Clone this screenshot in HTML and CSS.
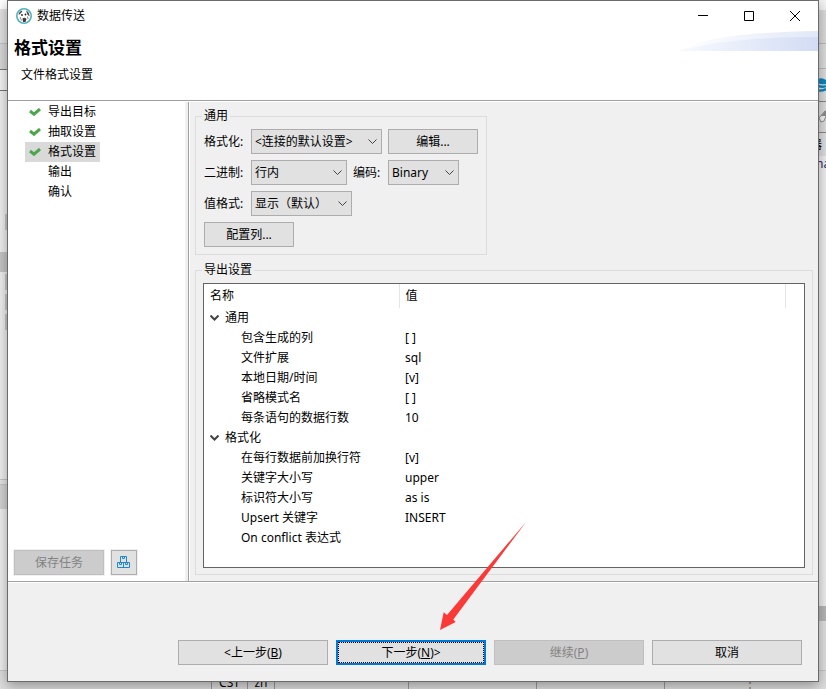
FILE: index.html
```html
<!DOCTYPE html>
<html lang="zh-CN">
<head>
<meta charset="utf-8">
<title>数据传送</title>
<link rel="stylesheet" href="styles.css">
</head>
<body>
<div class="desktop">
  <div class="backdrop" aria-hidden="true">
    <div class="strip strip-left"></div>
    <div class="strip strip-right">
      <svg class="edge-icons" width="8" height="60" viewBox="0 0 8 60">
        <path d="M0 1Q4 -1 8 2V6Q3 7 0 5Z" fill="#0d86c0"/>
        <path d="M0 8Q5 9.500 8 8M0 12.500Q5 13 8 11" fill="none" stroke="#0d86c0" stroke-width="2.400"/>
        <path d="M1 40L7 33V36L8 38L6 43L3 44Z" fill="#f4f4f4" stroke="#8c8c8c"/>
        <path d="M3 38L8 32V38Z" fill="#8c8c8c"/>
      </svg>
      <span class="edge-text">器</span>
      <span class="edge-text edge-code">ha</span>
    </div>
    <div class="status-bar">
      <span class="cell cell-lead"></span><span class="cell cell-zone">CST</span><span class="cell cell-lang">zh</span><span class="cell cell-pos"></span><span class="cell cell-mode"></span><span class="cell cell-mode"></span><span class="cell cell-end">⋮</span>
    </div>
  </div>

  <main class="dialog">
    <header class="title-bar">
      <svg class="app-icon" width="16" height="16" viewBox="0 0 16 16">
        <circle cx="8" cy="8" r="7.200" fill="#fff" stroke="#4fb3bf" stroke-width="1.600"/>
        <path d="M2.500 7Q3 3 6.500 2.500L5.500 4.500L4 6ZM10 2.500Q13.500 4 13.500 8.500L11.500 6.500ZM6.500 10.500Q8.500 9 10.500 11L9.500 14H7Z" fill="#4a3c36"/>
        <path d="M4 9L5.500 12.500M11.500 8.500L12 11" stroke="#8b8480"/>
        <circle cx="6" cy="7" r=".9" fill="#222"/><circle cx="9.500" cy="6.500" r=".9" fill="#222"/>
      </svg>
      <span class="title-text">数据传送</span>
      <button class="win-button" aria-label="最小化"><svg width="10" height="11" viewBox="0 0 10 11"><path d="M0 5.500H10"/></svg></button>
      <button class="win-button" aria-label="最大化"><svg width="10" height="11" viewBox="0 0 10 11"><path d="M.5 1.500H9.500V10.500H.5Z"/></svg></button>
      <button class="win-button" aria-label="关闭"><svg width="10" height="11" viewBox="0 0 10 11"><path d="M0 1L10 11M10 1L0 11"/></svg></button>
    </header>

    <section class="banner">
      <h1>格式设置</h1>
      <p>文件格式设置</p>
      <svg class="swoosh" width="140" height="20" viewBox="0 0 140 20">
        <defs>
          <linearGradient id="s1"><stop offset="0" stop-color="#fff"/><stop offset="1" stop-color="#e1e8f7"/></linearGradient>
          <linearGradient id="s2"><stop offset="0" stop-color="#f8fafe"/><stop offset="1" stop-color="#d3dcf4"/></linearGradient>
        </defs>
        <path d="M0 20C25 6 75 1 140 0V20Z" fill="url(#s1)"/>
        <path d="M0 20C40 9 90 6 140 6V20Z" fill="url(#s2)"/>
      </svg>
    </section>

    <div class="body">
      <aside class="sidebar">
        <ul class="steps">
          <li><svg class="check" width="12" height="8" viewBox="0 0 12 8"><path d="M1 3L5 6.200L11 1"/></svg><a href="#target">导出目标</a></li>
          <li><svg class="check" width="12" height="8" viewBox="0 0 12 8"><path d="M1 3L5 6.200L11 1"/></svg><a href="#extract">抽取设置</a></li>
          <li class="current"><svg class="check" width="12" height="8" viewBox="0 0 12 8"><path d="M1 3L5 6.200L11 1"/></svg><a href="#format">格式设置</a></li>
          <li><span class="check"></span><a href="#output">输出</a></li>
          <li><span class="check"></span><a href="#confirm">确认</a></li>
        </ul>
        <div class="task-actions">
          <button class="btn btn-small" disabled>保存任务</button>
          <button class="btn btn-icon" aria-label="变量">
            <svg width="14" height="13" viewBox="0 0 14 13"><path d="M3.500 6.500V.5H9.500V6.500M5.500 .5V2.500H7.500V.5M.5 6.500H12.500V11.500H.5ZM6.500 6.500V11.500M2.500 6.500V8.500H4.500V6.500M8.500 6.500V8.500H10.500V6.500"/></svg>
          </button>
        </div>
      </aside>

      <div class="content">
        <fieldset class="group general">
          <legend>通用</legend>
          <div class="form">
            <label for="fmt">格式化:</label>
            <div class="row">
              <span class="select wide"><select id="fmt"><option>&lt;连接的默认设置&gt;</option></select><svg width="9" height="6" viewBox="0 0 9 6"><path d="M.5 .5L4.500 4.500L8.500 .5"/></svg></span>
              <button class="btn btn-small">编辑...</button>
            </div>
            <label for="bin">二进制:</label>
            <div class="row">
              <span class="select mid"><select id="bin"><option>行内</option></select><svg width="9" height="6" viewBox="0 0 9 6"><path d="M.5 .5L4.500 4.500L8.500 .5"/></svg></span>
              <label class="inline-label" for="enc">编码:</label>
              <span class="select narrow"><select id="enc"><option>Binary</option></select><svg width="9" height="6" viewBox="0 0 9 6"><path d="M.5 .5L4.500 4.500L8.500 .5"/></svg></span>
            </div>
            <label for="val">值格式:</label>
            <div class="row">
              <span class="select value"><select id="val"><option>显示（默认）</option></select><svg width="9" height="6" viewBox="0 0 9 6"><path d="M.5 .5L4.500 4.500L8.500 .5"/></svg></span>
            </div>
          </div>
          <button class="btn btn-small">配置列...</button>
        </fieldset>

        <fieldset class="group export">
          <legend>导出设置</legend>
          <div class="tree">
            <table>
              <colgroup><col class="col-name"><col><col class="col-end"></colgroup>
              <thead><tr><th>名称</th><th>值</th><th></th></tr></thead>
              <tbody>
                <tr class="branch"><td><svg width="9" height="6" viewBox="0 0 9 6"><path d="M.5 .5L4.500 4.500L8.500 .5"/></svg>通用</td><td></td><td></td></tr>
                <tr><td>包含生成的列</td><td>[ ]</td><td></td></tr>
                <tr><td>文件扩展</td><td>sql</td><td></td></tr>
                <tr><td>本地日期/时间</td><td>[v]</td><td></td></tr>
                <tr><td>省略模式名</td><td>[ ]</td><td></td></tr>
                <tr><td>每条语句的数据行数</td><td>10</td><td></td></tr>
                <tr class="branch"><td><svg width="9" height="6" viewBox="0 0 9 6"><path d="M.5 .5L4.500 4.500L8.500 .5"/></svg>格式化</td><td></td><td></td></tr>
                <tr><td>在每行数据前加换行符</td><td>[v]</td><td></td></tr>
                <tr><td>关键字大小写</td><td>upper</td><td></td></tr>
                <tr><td>标识符大小写</td><td>as is</td><td></td></tr>
                <tr><td>Upsert 关键字</td><td>INSERT</td><td></td></tr>
                <tr><td>On conflict 表达式</td><td></td><td></td></tr>
              </tbody>
            </table>
          </div>
        </fieldset>
      </div>
    </div>

    <footer class="footer">
      <button class="btn">&lt;上一步(<u>B</u>)</button>
      <div class="next-wrap">
        <button class="btn btn-default"><span>下一步(<u>N</u>)&gt;</span></button>
        <svg class="arrow" width="88" height="110" viewBox="0 0 88 110"><path d="M87 1L14.300 98.500L16.700 101L1 109L4.700 91.300L8 94Z" fill="#fb3a38"/></svg>
      </div>
      <button class="btn" disabled>继续(<u>P</u>)</button>
      <button class="btn">取消</button>
    </footer>
  </main>
</div>
</body>
</html>
```
FILE: styles.css
```css
* { box-sizing: border-box; }

body {
  margin: 0;
  font: 12px/16px "Noto Sans", "Noto Sans CJK SC", sans-serif;
  color: #000;
}

button, select { font: inherit; color: inherit; }

.desktop {
  position: relative;
  display: flex;
  min-height: 100vh;
  padding: 0 7px 7px;
  overflow: hidden;
}

.backdrop {
  position: absolute;
  inset: 0;
  display: grid;
  grid-template-columns: 8px 1fr 8px;
  grid-template-rows: 1fr 19px;
  background: #efefef;
}

.strip-left {
  background:
    linear-gradient(transparent 214px, #c8c8c8 214px 230px, transparent 230px 274px, #c8c8c8 274px 290px, transparent 290px 294px, #c8c8c8 294px 310px, transparent 310px 314px, #c8c8c8 314px 330px, transparent 330px) 5px 0 / 3px 100% no-repeat,
    linear-gradient(#fff 0 9px, #e2e2e2 9px 43px, #c4c4c4 43px 44px, #d9d9d9 44px 69px, #777 69px 70px, #f4f4f4 70px 90px, #777 90px 91px, #efefef 91px 252px, #c6c6c6 252px 272px, #efefef 272px 479px, #c4c4c4 479px 480px, #e6e6e6 480px 484px, #c4c4c4 484px 485px, #d4d4d4 485px 509px, #efefef 509px);
}

.strip-right {
  grid-column: 3;
  position: relative;
  padding-top: 78px;
  overflow: hidden;
  background: linear-gradient(#f4f4f4 0 10px, #dcdcdc 10px 43px, #bbb 43px 44px, #dedede 44px 68px, #bbb 68px 69px, #dedede 69px 101px, #888 101px 102px, #dedede 102px 132px, #888 132px 133px, #e0e0e0 133px 156px, #f0f0f0 156px 606px, #b8b8b8 606px 621px, #e2e2e2 621px);
}

.edge-icons { display: block; }
.edge-text { display: block; margin-left: -8px; line-height: 14px; }
.edge-code { margin: 5px 0 0 -2px; color: #226; }

.status-bar {
  grid-column: 1 / -1;
  display: flex;
  border-top: 1px solid #c8c8c8;
  background: #dedede;
  line-height: 24px;
}

.cell { flex: none; border-right: 1px solid #999; text-align: center; }
.cell-lead { width: 212px; }
.cell-zone { width: 36px; }
.cell-lang { width: 27px; }
.cell-pos { width: 134px; }
.cell-mode { width: 128px; }
.cell-end { width: 170px; border: 0; color: #8a7c6c; }

.dialog {
  position: relative;
  flex: 1;
  display: flex;
  flex-direction: column;
  min-width: 0;
  border: 1px solid #6b6b6b;
  background: #f0f0f0;
  box-shadow: 0 4px 12px rgba(0, 0, 0, .35);
}

.title-bar {
  display: flex;
  align-items: center;
  height: 29px;
  padding-left: 8px;
  background: #fff;
}

.app-icon { margin-right: 5px; }
.title-text { flex: 1; }

.win-button {
  width: 46px;
  height: 29px;
  padding: 0;
  border: 0;
  background: none;
}

.win-button svg { display: block; margin: auto; fill: none; stroke: #000; }

.banner {
  position: relative;
  height: 71px;
  padding: 6px;
  border-bottom: 1px solid #a0a0a0;
  box-shadow: 0 1px #fff;
  background: #fff;
}

.banner h1 { margin: 0; font-size: 17px; line-height: 24px; }
.banner p { margin: 7px; }
.swoosh { position: absolute; top: 1px; right: 0; }

.body { flex: 1; display: flex; }

.sidebar {
  flex: none;
  display: flex;
  flex-direction: column;
  justify-content: space-between;
  width: 180px;
  border-right: 3px solid #f0f0f0;
  box-shadow: 1px 0 #a0a0a0, 2px 0 #fff;
  background: #fff;
}

.steps { margin: 1px 0 0 17px; padding: 0; list-style: none; }

.steps li {
  display: flex;
  align-items: center;
  width: 75px;
  height: 20px;
  padding-left: 4px;
}

.steps .current { background: #d9d9d9; }
.steps a { color: inherit; text-decoration: none; }
.check { flex: none; width: 12px; margin-right: 7px; fill: none; stroke: #4ca64c; stroke-width: 3; }

.task-actions { display: flex; gap: 7px; padding: 0 6px 6px; }
.task-actions .btn { box-shadow: 0 0 0 1px #f0f0f0; }

.btn {
  width: 150px;
  height: 25px;
  padding: 0;
  border: 1px solid #adadad;
  background: #e1e1e1;
  text-align: center;
}

.btn:disabled { border-color: #bfbfbf; background: #ccc; color: #838383; }
.btn-small { width: 90px; }
.btn-icon { width: 26px; }
.btn-icon svg { display: block; margin: auto; fill: none; stroke: #1e88d2; }

.btn-default { display: flex; border: 2px solid #0078d7; }
.btn-default span { flex: 1; border: 1px dotted #000; line-height: 19px; }

.content {
  flex: 1;
  display: flex;
  flex-direction: column;
  gap: 7px;
  min-width: 0;
  padding: 7px 5px 6px 7px;
}

.group { min-width: 0; margin: 0; padding: 6px 8px; border: 1px solid #dcdcdc; }
.group legend { margin-left: -2px; padding: 0 2px; }

.general { align-self: flex-start; width: 292px; padding: 5px 8px 7px; }
.general > .btn { display: block; }

.form {
  display: grid;
  grid-template-columns: 47px 1fr;
  row-gap: 6px;
  align-items: center;
  margin-bottom: 6px;
}

.row { display: flex; align-items: center; gap: 6px; }
.form label { white-space: nowrap; }
.form .inline-label { width: 29px; }

.select { position: relative; height: 25px; }

.select select {
  width: 100%;
  height: 100%;
  padding: 0 3px;
  border: 1px solid #adadad;
  border-radius: 0;
  background: #e1e1e1;
  appearance: none;
}

.select svg { position: absolute; top: 10px; right: 5px; fill: none; stroke: #444; pointer-events: none; }
.wide { width: 131px; }
.mid { width: 96px; }
.narrow { width: 71px; }
.value { width: 101px; }

.export { flex: 1; display: flex; padding: 5px 7px 6px; }
.export legend { margin-left: -1px; }

.tree { flex: 1; min-width: 0; border: 1px solid #646464; background: #fff; }

table { width: 100%; border-collapse: collapse; table-layout: fixed; }
.col-name { width: 195px; }
.col-end { width: 19px; }

th, td { height: 20px; padding: 0 0 0 6px; text-align: left; white-space: nowrap; }
th { height: 24px; border-right: 1px solid #e5e5e5; font-weight: normal; }
th:last-child { border-right: 0; }
td:first-child { padding-left: 37px; }
.branch td:first-child { padding-left: 6px; }
.branch svg { margin-right: 6px; vertical-align: 1px; fill: none; stroke: #444; stroke-width: 2; }

.footer {
  display: flex;
  justify-content: flex-end;
  gap: 8px;
  padding: 58px 16px 16px;
  border-top: 1px solid #a0a0a0;
  box-shadow: inset 0 1px #fff;
}

.next-wrap { position: relative; }
.arrow { position: absolute; left: 103px; bottom: 34px; pointer-events: none; }
```
